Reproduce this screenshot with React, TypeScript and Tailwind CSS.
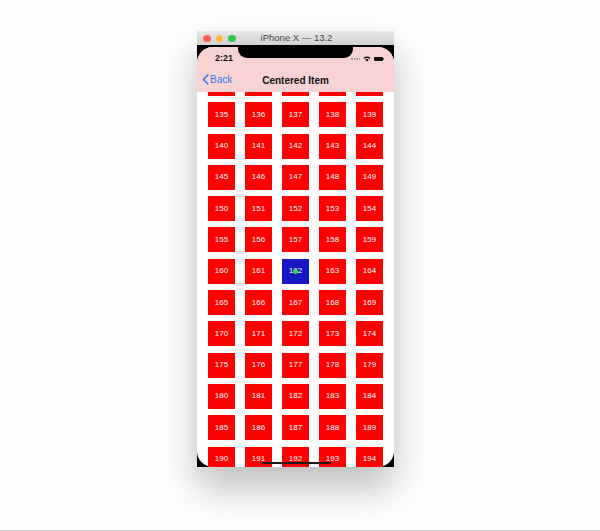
import React from "react";

const rows: number[][] = [];
for (let r = 0; r < 13; r++) {
  const row: number[] = [];
  for (let c = 0; c < 5; c++) row.push(130 + r * 5 + c);
  rows.push(row);
}

export default function App() {
  return (
    <div
      className="w-[600px] h-[531px] bg-[#fefefe] flex flex-col"
      style={{ fontFamily: "'Liberation Sans', Arial, sans-serif" }}
    >
      <div className="flex-1 pt-[31px] pl-[197px]">
        <div className="w-[197px] shadow-[0_20px_36px_rgba(0,0,0,0.26)]">
          {/* title bar */}
          <div className="relative h-[14px] bg-gradient-to-b from-[#e9e7e9] to-[#d2d0d2] flex items-center justify-center">
            <div className="absolute left-[6px] top-[3.5px] flex gap-[5px]">
              <div className="w-[7.5px] h-[7.5px] rounded-full bg-[#fc605c]" />
              <div className="w-[7.5px] h-[7.5px] rounded-full bg-[#fdbc40]" />
              <div className="w-[7.5px] h-[7.5px] rounded-full bg-[#34c84a]" />
            </div>
            <span className="text-[9.5px] leading-none text-[#4a4a4a] ml-[2px]">iPhone X — 13.2</span>
          </div>
          {/* screen */}
          <div className="bg-black h-[422px] pt-[2px]">
            <div className="relative h-[420px] rounded-[16px] overflow-hidden bg-white flex flex-col">
              {/* header */}
              <div className="h-[45px] shrink-0 bg-[#f9d3d3]">
                <div className="flex items-center justify-between h-[22px] pl-[18px] pr-[10px]">
                  <span className="text-[9px] font-bold text-[#111] pt-[2px]">2:21</span>
                  <div className="flex items-center gap-[3px] pt-[2px]">
                    <div className="flex gap-[1px] items-end">
                      <div className="w-[1.5px] h-[1.5px] bg-[#9a9a9a]" />
                      <div className="w-[1.5px] h-[1.5px] bg-[#9a9a9a]" />
                      <div className="w-[1.5px] h-[1.5px] bg-[#9a9a9a]" />
                      <div className="w-[1.5px] h-[1.5px] bg-[#9a9a9a]" />
                    </div>
                    <svg width="8" height="6" viewBox="0 0 8 6">
                      <path d="M0.5 2 A5 5 0 0 1 7.5 2 L6.6 2.9 A3.8 3.8 0 0 0 1.4 2.9 Z" fill="#111" />
                      <path d="M2.2 3.7 A2.6 2.6 0 0 1 5.8 3.7 L4 5.6 Z" fill="#111" />
                    </svg>
                    <div className="flex items-center">
                      <div className="w-[9px] h-[4.5px] rounded-[1px] bg-[#111]" />
                      <div className="w-[1px] h-[2px] bg-[#666]" />
                    </div>
                  </div>
                </div>
                <div className="relative h-[23px] flex items-center justify-center">
                  <div className="absolute left-[5px] top-[5px] flex items-center text-[#2f7bf6]">
                    <svg width="7" height="11" viewBox="0 0 7 11">
                      <path d="M5.8 1 L1.5 5.5 L5.8 10" fill="none" stroke="#2f7bf6" strokeWidth="1.6" strokeLinecap="round" strokeLinejoin="round" />
                    </svg>
                    <span className="text-[10px] leading-none ml-[1px]">Back</span>
                  </div>
                  <span className="text-[10px] font-bold text-[#111] leading-none">Centered Item</span>
                </div>
              </div>
              {/* grid */}
              <div className="flex-1 overflow-hidden">
                <div className="flex flex-col gap-[6.3px] mt-[-21px] px-[11px]">
                  {rows.map((row, i) => (
                    <div key={i} className="flex justify-between">
                      {row.map((n) => (
                        <div
                          key={n}
                          className={`relative w-[27px] h-[25px] flex items-center justify-center ${
                            n === 162 ? "bg-[#1717c4]" : "bg-[#fe0000]"
                          }`}
                        >
                          {i > 0 && (
                            <span className="text-[8px] leading-none text-white font-medium">{n}</span>
                          )}
                          {n === 162 && (
                            <div className="absolute left-[11px] top-[10px] w-[5px] h-[5px] rounded-full bg-[#2ee03a]" />
                          )}
                        </div>
                      ))}
                    </div>
                  ))}
                </div>
              </div>
              {/* notch */}
              <div className="absolute left-[41px] top-[-2px] w-[115px] h-[13px] bg-black rounded-b-[9px]" />
              {/* home indicator */}
              <div className="absolute left-[65px] bottom-[3px] w-[69px] h-[2.5px] rounded-full bg-[#1a1a1a]" />
            </div>
          </div>
        </div>
      </div>
      <div className="h-[1px] bg-[#c9c9c9]" />
    </div>
  );
}
